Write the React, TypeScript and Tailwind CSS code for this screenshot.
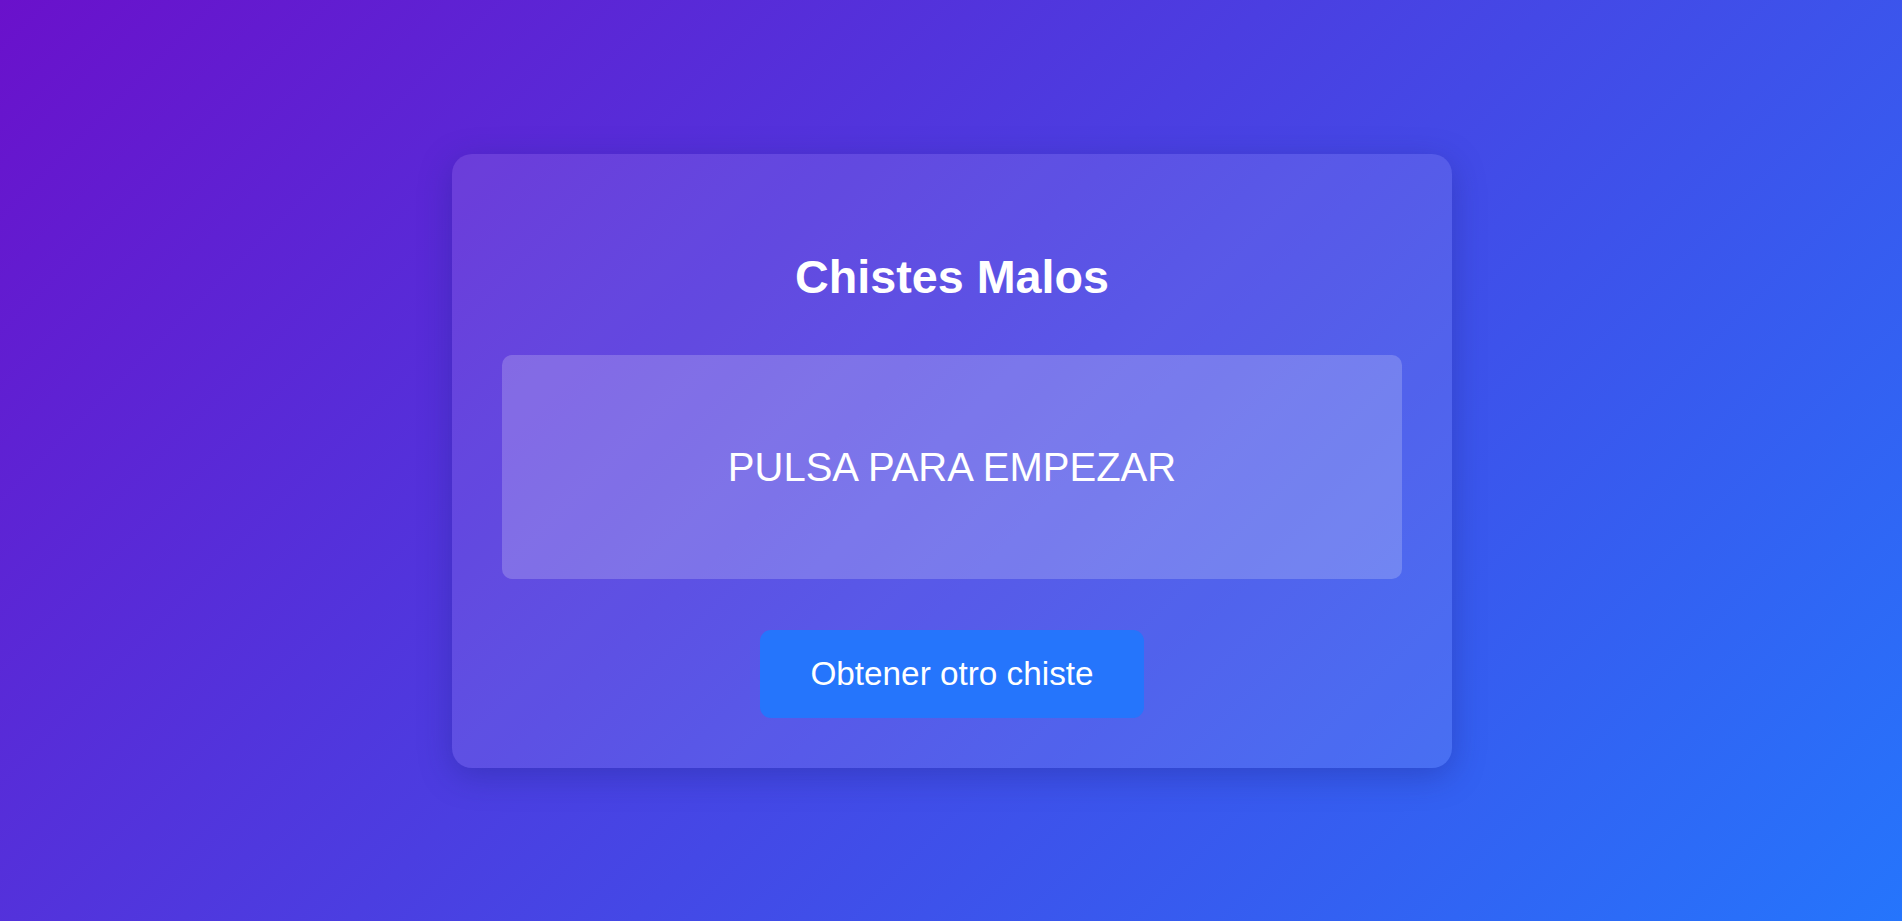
export default function App() {
  return (
    <div
      className="min-h-screen w-full flex items-center justify-center bg-[linear-gradient(135deg,#6a11cb_0%,#2575fc_100%)]"
      style={{ fontFamily: '"Liberation Sans", Arial, sans-serif' }}
    >
      <div className="ml-[2px] w-[1000px] rounded-[20px] bg-white/10 shadow-[0_8px_32px_rgba(31,38,135,0.37)] p-[50px] flex flex-col items-center">
        <h1 className="mt-[47px] mb-[51px] text-[46.7px] leading-[53px] font-bold text-white">
          Chistes Malos
        </h1>
        <div className="w-full h-[224px] rounded-[10px] bg-white/20 flex items-center justify-center">
          <p className="text-[40px] leading-[46px] text-white">PULSA PARA EMPEZAR</p>
        </div>
        <button className="mt-[51px] w-[384px] h-[88px] rounded-[11px] bg-[#2575fc] text-white text-[33.3px] leading-[38px]">
          Obtener otro chiste
        </button>
      </div>
    </div>
  );
}
